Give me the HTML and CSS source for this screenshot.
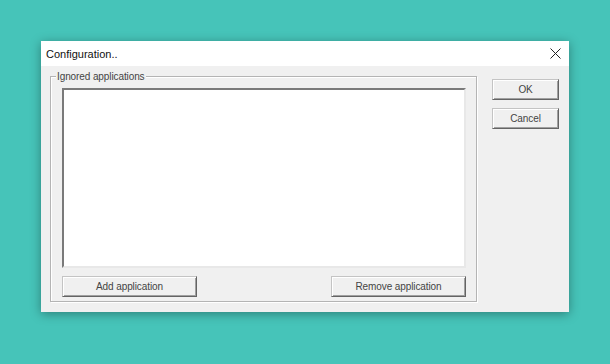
FILE: index.html
```html
<!DOCTYPE html>
<html lang="en">
<head>
    <meta charset="UTF-8">
    <meta name="viewport" content="width=device-width, initial-scale=1.0">
    <title>Configuration</title>
    <link rel="stylesheet" href="styles.css">
</head>
<body>
    <div class="dialog">
        <div class="titlebar">
            <span class="title">Configuration..</span>
            <svg class="close" width="11" height="11" viewBox="0 0 11 11">
                <path d="M0.5 0.5 L10.5 10.5 M10.5 0.5 L0.5 10.5" stroke="#222" stroke-width="1" fill="none"/>
            </svg>
        </div>
        <div class="content">
            <div class="group">
                <span class="group-label">Ignored applications</span>
                <div class="listbox"></div>
                <div class="group-buttons">
                    <button class="btn wide">Add application</button>
                    <button class="btn wide">Remove application</button>
                </div>
            </div>
            <div class="side">
                <button class="btn small">OK</button>
                <button class="btn small">Cancel</button>
            </div>
        </div>
    </div>
</body>
</html>
```

FILE: styles.css
```css
body {
    margin: 0;
    background: #46c4b9;
    font-family: 'Liberation Sans', Arial, sans-serif;
    width: 610px;
    height: 364px;
    overflow: hidden;
}
.dialog {
    margin: 41px 0 0 41px;
    width: 528px;
    box-shadow: 0 2px 10px rgba(0,0,0,0.35);
}
.titlebar {
    height: 25px;
    background: #fff;
    display: flex;
    align-items: center;
    justify-content: space-between;
    padding: 0 8px 0 5px;
}
.title {
    font-size: 11px;
    color: #111;
}
.close {
    display: block;
}
.content {
    background: #f0f0f0;
    display: flex;
    padding: 10px 10px 10px 9px;
}
.group {
    position: relative;
    width: 406px;
    border: 1px solid #b4b4b4;
    box-shadow: inset 1px 1px 0 #fff, 1px 1px 0 #fff;
    padding: 11px 10px 4px 11px;
}
.group-label {
    position: absolute;
    top: -6px;
    left: 5px;
    padding: 0 1px;
    background: #f0f0f0;
    font-size: 10px;
    color: #444;
    letter-spacing: -0.1px;
}
.listbox {
    height: 176px;
    background: #fff;
    border: 2px solid;
    border-color: #7a7a7a #e8e8e8 #e8e8e8 #7a7a7a;
}
.group-buttons {
    display: flex;
    justify-content: space-between;
    margin-top: 8px;
}
.btn {
    height: 21px;
    background: #f0f0f0;
    border: 1px solid;
    border-color: #c4c4c4 #646464 #646464 #c4c4c4;
    box-shadow: inset 1px 1px 0 #fff, inset -1px -1px 0 #a0a0a0;
    font-family: 'Liberation Sans', Arial, sans-serif;
    font-size: 10px;
    color: #444;
    padding: 0;
    letter-spacing: -0.1px;
}
.wide {
    width: 135px;
}
.side {
    display: flex;
    flex-direction: column;
    gap: 8px;
    margin-left: 15px;
    padding-top: 3px;
}
.small {
    width: 67px;
}
```
